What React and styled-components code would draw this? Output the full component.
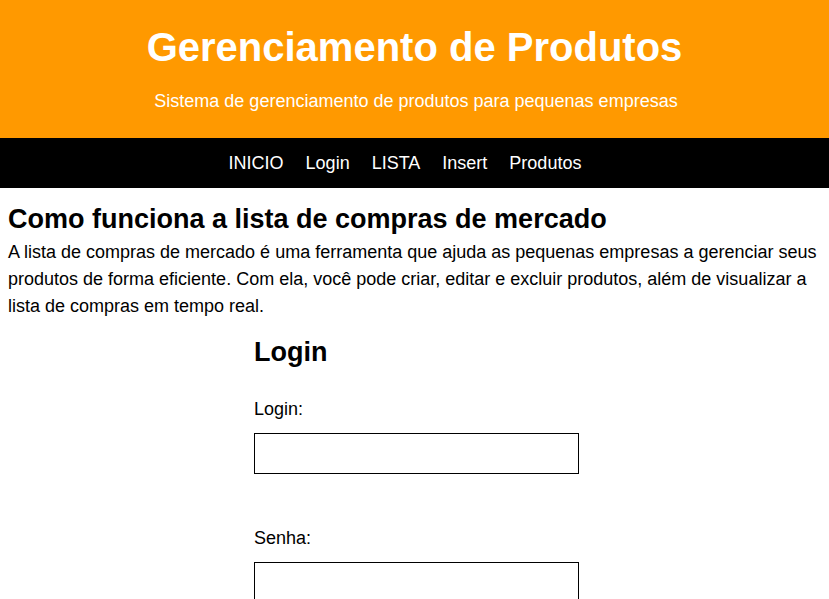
import React from 'react'
import styled, { createGlobalStyle } from 'styled-components'

const GlobalStyle = createGlobalStyle`
    body {
        margin: 0;
        font-family: "Liberation Sans", Arial, sans-serif;
        font-size: 18px;
        color: #000000;
        background: #ffffff;
    }
`

const Header = styled.header`
    background: #ff9900;
    color: #ffffff;
    text-align: center;
    padding: 24px 0 26px;

    h1 {
        margin: 0;
        font-size: 40px;
        line-height: 46px;
        font-weight: bold;
    }

    p {
        margin: 21px 0 0;
        padding-left: 3px;
        font-size: 18px;
        line-height: 21px;
    }
`

const Nav = styled.nav`
    background: #000000;
    height: 50px;
    display: flex;
    justify-content: center;
    align-items: center;
    gap: 22px;
    padding-right: 19px;
`

const NavLink = styled.a`
    color: #ffffff;
    text-decoration: none;
    font-size: 18px;
    line-height: 21px;
`

const Main = styled.main`
    padding: 0 8px;

    h2 {
        margin: 16px 0 5px;
        font-size: 27px;
        line-height: 30px;
        font-weight: bold;
    }

    p {
        margin: 0;
        font-size: 18px;
        line-height: 27px;
    }
`

const LoginBox = styled.form`
    width: 321px;
    margin: 17px auto 0;
    display: flex;
    flex-direction: column;

    h2 {
        margin: 0;
        font-size: 27px;
        line-height: 31px;
    }
`

const Label = styled.label`
    display: block;
    font-size: 18px;
    line-height: 27px;
    margin-top: ${props => props.first ? '28px' : '51px'};
`

const Input = styled.input`
    display: block;
    box-sizing: content-box;
    width: 100%;
    height: 37px;
    padding: 1px;
    margin: 10px 0 0;
    border: 1px solid #000000;
    border-radius: 0;
    font-size: 16px;
    font-family: inherit;
    outline: none;
`

const menu = ['INICIO', 'Login', 'LISTA', 'Insert', 'Produtos']

const App = () => {
    return (
        <>
            <GlobalStyle />
            <Header>
                <h1>Gerenciamento de Produtos</h1>
                <p>Sistema de gerenciamento de produtos para pequenas empresas</p>
            </Header>
            <Nav>
                {menu.map((item) => (
                    <NavLink key={item} href="#">{item}</NavLink>
                ))}
            </Nav>
            <Main>
                <h2>Como funciona a lista de compras de mercado</h2>
                <p>
                    A lista de compras de mercado é uma ferramenta que ajuda as pequenas empresas a gerenciar seus
                    produtos de forma eficiente. Com ela, você pode criar, editar e excluir produtos, além de visualizar a
                    lista de compras em tempo real.
                </p>
                <LoginBox onSubmit={(e) => e.preventDefault()}>
                    <h2>Login</h2>
                    <Label first htmlFor="login">Login:</Label>
                    <Input id="login" type="text" />
                    <Label htmlFor="senha">Senha:</Label>
                    <Input id="senha" type="password" />
                </LoginBox>
            </Main>
        </>
    )
}

export default App
